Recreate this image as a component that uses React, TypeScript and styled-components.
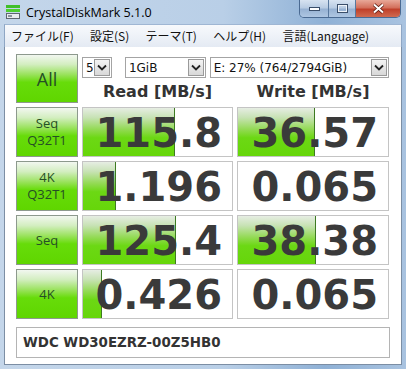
import React from "react";
import styled, { createGlobalStyle } from "styled-components";

const Global = createGlobalStyle`
  html, body { margin: 0; padding: 0; overflow: hidden; background: #fff; }
`;

const Window = styled.div`
  width: 406px;
  height: 369px;
  box-sizing: border-box;
  display: flex;
  flex-direction: column;
  background: linear-gradient(to right, #c4d6ea 0%, #b9cfe7 55%, #8fb1d6 80%, #a9c3e0 100%);
  padding: 0 4px 4px 4px;
  font-family: "Noto Sans", "DejaVu Sans", sans-serif;
`;

const TitleBar = styled.div`
  height: 24px;
  display: flex;
  align-items: center;
  position: relative;
`;

const AppIcon = styled.svg`
  width: 16px;
  height: 16px;
  margin: 0 5px 0 1px;
  flex: none;
`;

const Title = styled.span`
  font-family: "Open Sans", "Noto Sans", sans-serif;
  font-size: 12.5px;
  color: #000;
`;

const Caption = styled.div`
  position: absolute;
  top: 0;
  right: 1px;
  display: flex;
  height: 17px;
  border: 1px solid #4a6a92;
  border-top: none;
  border-radius: 0 0 5px 5px;
  overflow: hidden;
`;

const CapBtn = styled.div<{ $w: number; $close?: boolean }>`
  width: ${(p) => p.$w}px;
  height: 100%;
  display: flex;
  align-items: center;
  justify-content: center;
  border-left: ${(p) => (p.$w === 28 ? "none" : "1px solid #58789e")};
  background: ${(p) =>
    p.$close
      ? "linear-gradient(to bottom, #e8a898 0%, #d3705c 45%, #c0402a 55%, #d06a50 100%)"
      : "linear-gradient(to bottom, #d7e3f1 0%, #b9cce3 45%, #97b2d3 55%, #aec6e2 100%)"};
`;

const MenuBar = styled.div`
  height: 22px;
  display: flex;
  align-items: center;
  background: linear-gradient(to bottom, #f7f9fc 0%, #eef2f8 50%, #e4eaf3 100%);
  border-top: 1px solid #9fb6d3;
  border-left: 1px solid #8ea6c4;
  border-right: 1px solid #8ea6c4;
`;

const MenuItem = styled.span`
  font-family: "Noto Sans CJK JP", "Noto Sans", sans-serif;
  font-size: 12px;
  color: #111;
  padding: 0 7px 0 6px;
  margin-right: 3.3px;
  line-height: 20px;
`;

const Client = styled.div`
  flex: 1;
  background: #fff;
  border: 1px solid #7c8ea4;
  border-top: none;
  padding: 7px 0 0 11px;
  display: flex;
  flex-direction: column;
`;

const Grid = styled.div`
  display: grid;
  grid-template-columns: 62px 151px 152px;
  grid-template-rows: 49px repeat(4, 50px);
  column-gap: 4px;
  row-gap: 4px;
`;

const LabelButton = styled.div<{ $big?: boolean }>`
  box-sizing: border-box;
  border: 1px solid #8d998d;
  background: linear-gradient(to bottom, #f2f7f0 0%, #d3eec0 20%, #98e25a 42%, #67dc0a 58%, #5fd600 100%);
  display: flex;
  flex-direction: column;
  align-items: center;
  justify-content: center;
  font-size: ${(p) => (p.$big ? "18px" : "13px")};
  line-height: ${(p) => (p.$big ? "20px" : "17px")};
`;

const LabelLine = styled.span`
  font-family: "Open Sans", "Noto Sans", sans-serif;
  color: #254f25;
`;

const TopRight = styled.div`
  grid-column: 2 / 4;
  display: flex;
  flex-direction: column;
`;

const SelectRow = styled.div`
  display: flex;
  align-items: center;
  margin-top: 3px;
  height: 21px;
`;

const Select = styled.div<{ $w: number; $gap: number }>`
  box-sizing: border-box;
  width: ${(p) => p.$w}px;
  height: 21px;
  margin-right: ${(p) => p.$gap}px;
  border: 1px solid #a4a4a4;
  background: #fff;
  display: flex;
  align-items: center;
  justify-content: space-between;
  font-family: "DejaVu Sans", sans-serif;
  font-size: 12px;
  color: #111;
  padding-left: 3px;
`;

const Arrow = styled.div`
  width: 16px;
  height: 17px;
  margin-right: 1px;
  box-sizing: border-box;
  border: 1px solid #9a9a9a;
  background: linear-gradient(to bottom, #f4f4f4, #d8d8d8);
  display: flex;
  align-items: center;
  justify-content: center;
`;

const Headers = styled.div`
  display: flex;
  flex: 1;
  align-items: center;
  column-gap: 4px;
`;

const Header = styled.div<{ $w: number }>`
  width: ${(p) => p.$w}px;
  text-align: center;
  font-family: "DejaVu Sans", sans-serif;
  font-weight: bold;
  font-size: 16px;
  color: #333;
  padding-top: 2px;
`;

const Cell = styled.div`
  position: relative;
  box-sizing: border-box;
  border: 1px solid #c4c4c4;
  background: #fff;
  overflow: hidden;
  display: flex;
  align-items: center;
  justify-content: flex-end;
  padding-right: 10px;
`;

const Meter = styled.div`
  position: absolute;
  left: 0;
  top: 0;
  bottom: 0;
  box-sizing: border-box;
  border-right: 1px solid #3e7a22;
  background: linear-gradient(to bottom, #e6ede3 0%, #c7e2b4 20%, #92da52 45%, #6cd814 62%, #66d60a 100%);
`;

const Value = styled.span`
  position: relative;
  font-family: "DejaVu Sans", sans-serif;
  font-weight: bold;
  font-size: 40px;
  line-height: 40px;
  color: #3a3a3a;
  padding-top: 2px;
`;

const ModelBox = styled.div`
  box-sizing: border-box;
  margin-top: 8px;
  width: 374px;
  height: 31px;
  border: 1px solid #b4b4b4;
  display: flex;
  align-items: center;
  padding-left: 6px;
  font-family: "DejaVu Sans", sans-serif;
  font-weight: bold;
  font-size: 13.4px;
  color: #333;
`;

const Chevron = () => (
  <svg width="10" height="7" viewBox="0 0 10 7">
    <path d="M1 1.5 L5 5.5 L9 1.5" fill="none" stroke="#222" strokeWidth="1.8" />
  </svg>
);

const rows = [
  { label: ["Seq", "Q32T1"], read: "115.8", rw: 92, write: "36.57", ww: 77 },
  { label: ["4K", "Q32T1"], read: "1.196", rw: 33, write: "0.065", ww: 0 },
  { label: ["Seq"], read: "125.4", rw: 93, write: "38.38", ww: 78 },
  { label: ["4K"], read: "0.426", rw: 19, write: "0.065", ww: 0 },
];

export default function App() {
  return (
    <>
      <Global />
      <Window>
        <TitleBar>
          <AppIcon viewBox="0 0 16 16">
            <rect x="1" y="1" width="14" height="3" fill="#3fbf2a" />
            <rect x="1" y="5" width="14" height="3" fill="#4fcf30" />
            <rect x="1.5" y="9.5" width="13" height="5" fill="#e9ecef" stroke="#5f6670" />
            <rect x="3" y="11" width="4" height="2" fill="#8a939c" />
          </AppIcon>
          <Title>CrystalDiskMark 5.1.0</Title>
          <Caption>
            <CapBtn $w={28}>
              <svg width="11" height="4" viewBox="0 0 11 4">
                <rect x="0.5" y="0.5" width="10" height="3" fill="#fff" stroke="#3a4e6a" />
              </svg>
            </CapBtn>
            <CapBtn $w={26}>
              <svg width="11" height="9" viewBox="0 0 11 9">
                <rect x="0.5" y="0.5" width="10" height="8" fill="none" stroke="#3a4e6a" />
                <rect x="1.5" y="1.5" width="8" height="6" fill="none" stroke="#eef3f9" />
              </svg>
            </CapBtn>
            <CapBtn $w={44} $close>
              <svg width="13" height="11" viewBox="0 0 13 11">
                <path d="M2 1.5 L11 9.5 M11 1.5 L2 9.5" stroke="#5a1a10" strokeWidth="3.6" />
                <path d="M2 1.5 L11 9.5 M11 1.5 L2 9.5" stroke="#fff" strokeWidth="2" />
              </svg>
            </CapBtn>
          </Caption>
        </TitleBar>
        <MenuBar>
          <MenuItem>ファイル(F)</MenuItem>
          <MenuItem>設定(S)</MenuItem>
          <MenuItem>テーマ(T)</MenuItem>
          <MenuItem>ヘルプ(H)</MenuItem>
          <MenuItem>言語(Language)</MenuItem>
        </MenuBar>
        <Client>
          <Grid>
            <LabelButton $big>
              <LabelLine>All</LabelLine>
            </LabelButton>
            <TopRight>
              <SelectRow>
                <Select $w={30} $gap={13}>
                  5
                  <Arrow>
                    <Chevron />
                  </Arrow>
                </Select>
                <Select $w={81} $gap={4}>
                  1GiB
                  <Arrow>
                    <Chevron />
                  </Arrow>
                </Select>
                <Select $w={180} $gap={0}>
                  E: 27% (764/2794GiB)
                  <Arrow>
                    <Chevron />
                  </Arrow>
                </Select>
              </SelectRow>
              <Headers>
                <Header $w={151}>Read [MB/s]</Header>
                <Header $w={152}>Write [MB/s]</Header>
              </Headers>
            </TopRight>
            {rows.map((r, i) => (
              <React.Fragment key={i}>
                <LabelButton>
                  {r.label.map((l) => (
                    <LabelLine key={l}>{l}</LabelLine>
                  ))}
                </LabelButton>
                <Cell>
                  {r.rw > 0 && <Meter style={{ width: r.rw }} />}
                  <Value>{r.read}</Value>
                </Cell>
                <Cell>
                  {r.ww > 0 && <Meter style={{ width: r.ww }} />}
                  <Value>{r.write}</Value>
                </Cell>
              </React.Fragment>
            ))}
          </Grid>
          <ModelBox>WDC WD30EZRZ-00Z5HB0</ModelBox>
        </Client>
      </Window>
    </>
  );
}
